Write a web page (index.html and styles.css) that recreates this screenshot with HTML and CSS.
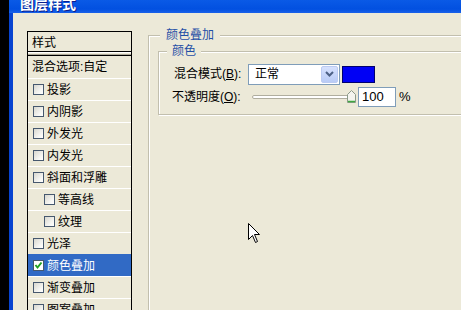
FILE: index.html
```html
<!DOCTYPE html>
<html lang="zh-CN">
<head>
    <meta charset="UTF-8">
    <title>图层样式</title>
    <link rel="stylesheet" href="styles.css">
</head>
<body>
    <div class="screen">
        <div class="edge"></div>
        <div class="win">
            <div class="titlebar"><span class="title">图层样式</span></div>
            <div class="client">
                <div class="styles-list">
                    <div class="list-head">样式</div>
                    <div class="list-sep"></div>
                    <div class="list-item blend">混合选项:自定</div>
                    <div class="list-item"><span class="chk"></span>投影</div>
                    <div class="list-item"><span class="chk"></span>内阴影</div>
                    <div class="list-item"><span class="chk"></span>外发光</div>
                    <div class="list-item"><span class="chk"></span>内发光</div>
                    <div class="list-item"><span class="chk"></span>斜面和浮雕</div>
                    <div class="list-item sub"><span class="chk"></span>等高线</div>
                    <div class="list-item sub"><span class="chk"></span>纹理</div>
                    <div class="list-item"><span class="chk"></span>光泽</div>
                    <div class="list-item selected">
                        <span class="chk">
                            <svg viewBox="0 0 11 11" width="11" height="11"><path d="M2.5 5 L4.5 7.5 L8.5 2.5" fill="none" stroke="#21a121" stroke-width="2"/></svg>
                        </span>颜色叠加
                    </div>
                    <div class="list-item"><span class="chk"></span>渐变叠加</div>
                    <div class="list-item"><span class="chk"></span>图案叠加</div>
                </div>

                <div class="panel">
                    <fieldset class="group outer">
                        <legend>颜色叠加</legend>
                        <fieldset class="group inner">
                            <legend>颜色</legend>
                            <div class="form">
                                <label class="lbl">混合模式(<u>B</u>):</label>
                                <div class="ctrl">
                                    <div class="combo">
                                        <span class="combo-text">正常</span>
                                        <span class="combo-btn">
                                            <svg viewBox="0 0 9 6" width="9" height="6"><path d="M1 1 L4.5 4.5 L8 1" fill="none" stroke="#4d6185" stroke-width="2"/></svg>
                                        </span>
                                    </div>
                                    <div class="swatch"></div>
                                </div>

                                <label class="lbl opacity">不透明度(<u>O</u>):</label>
                                <div class="ctrl">
                                    <div class="slider">
                                        <div class="track"></div>
                                        <svg class="thumb" viewBox="0 0 9 13" width="9" height="13">
                                            <path d="M4.5 0.5 L8.5 4.5 L8.5 12.5 L0.5 12.5 L0.5 4.5 Z" fill="#f4f4ee" stroke="#8c9a8a"/>
                                            <path d="M1 11.5 L8 11.5" stroke="#3fa83f" stroke-width="1.5"/>
                                        </svg>
                                    </div>
                                    <div class="num">100</div>
                                    <span class="pct">%</span>
                                </div>
                            </div>
                        </fieldset>
                    </fieldset>
                </div>
            </div>
        </div>

        <svg class="cursor" viewBox="0 0 13 22" width="13" height="22">
            <path d="M0.5 0.5 L0.5 16.5 L4.5 12.5 L7.5 19.5 L9.5 18.5 L6.5 11.5 L11.5 11.5 Z" fill="#fff" stroke="#000"/>
        </svg>
    </div>
</body>
</html>
```

FILE: styles.css
```css
* {
    box-sizing: border-box;
}
body {
    margin: 0;
    background: #000;
    font-family: 'Liberation Sans', 'Noto Sans CJK SC', sans-serif;
    font-size: 12px;
    color: #000;
}
.screen {
    position: relative;
    width: 461px;
    height: 310px;
    display: flex;
    overflow: hidden;
    background: #000;
}
.edge {
    width: 9px;
    flex-shrink: 0;
    background: #000;
}
.win {
    flex: 1;
    display: flex;
    flex-direction: column;
    min-width: 0;
    min-height: 0;
}
.titlebar {
    height: 13px;
    flex-shrink: 0;
    overflow: hidden;
    padding-left: 11px;
    background: linear-gradient(#0a5ae6, #0250e0 70%, #1a62ea);
}
.title {
    display: block;
    margin-top: -3px;
    line-height: 15px;
    font-size: 14px;
    font-weight: bold;
    color: #fff;
    text-shadow: 1px 1px 0 #0a1e8c;
}
.client {
    flex: 1;
    min-height: 0;
    overflow: hidden;
    display: flex;
    align-items: flex-start;
    padding: 18px 0 0 14px;
    background: #ece9d8;
    border-left: 4px solid #0844d0;
}

/* left style list */
.styles-list {
    width: 105px;
    flex-shrink: 0;
    border: 1px solid #000;
    border-bottom: none;
}
.list-head {
    height: 20px;
    padding-left: 4px;
    display: flex;
    align-items: center;
    border-bottom: 1px solid #000;
}
.list-sep {
    height: 4px;
    border-bottom: 1px solid #000;
    background: linear-gradient(#fff 0 1px, #ece9d8 1px 2px, #aca899 2px 3px);
}
.list-item {
    height: 22px;
    padding-left: 5px;
    display: flex;
    align-items: center;
    border-top: 1px solid #fff;
    line-height: 14px;
    white-space: nowrap;
}
.list-item.blend {
    height: 22px;
    padding-left: 4px;
    border-top: none;
}
.list-item.sub {
    padding-left: 16px;
}
.list-item.selected {
    background: #316ac5;
    border-top-color: #316ac5;
    color: #fff;
}
.chk {
    width: 11px;
    height: 11px;
    margin-right: 3px;
    flex-shrink: 0;
    border: 1px solid #46586e;
    background: linear-gradient(135deg, #d8d7cf, #f7f7f4 70%, #fff);
    display: flex;
}
.chk svg {
    margin: -1px;
}
.selected .chk {
    background: #fff;
}

/* right panel */
.panel {
    flex: 1;
    margin: -3px -30px 0 16px;
}
.group {
    margin: 0;
    border: 1px solid #c2bfae;
    box-shadow: inset 1px 1px 0 #fff, 1px 1px 0 #fff;
}
.group legend {
    padding: 0 6px;
    line-height: 14px;
    color: #1f4fa6;
    background: #ece9d8;
}
.outer {
    height: 320px;
    padding: 2px 0 0 9px;
}
.outer > legend {
    margin-left: 2px;
}
.inner {
    padding: 5px 0 6px 7px;
}
.inner legend {
    padding: 0 5px;
    margin-left: 1px;
}
.form {
    display: grid;
    grid-template-columns: 74px auto;
    grid-template-rows: 22px 23px;
    align-items: center;
    padding-left: 8px;
}
.lbl {
    white-space: nowrap;
    line-height: 14px;
}
.lbl.opacity {
    margin-left: -2px;
}
.ctrl {
    display: flex;
    align-items: center;
}
.combo {
    width: 92px;
    height: 21px;
    display: flex;
    align-items: center;
    justify-content: space-between;
    border: 1px solid #7f9db9;
    background: #fff;
    padding: 1px;
}
.combo-text {
    padding-left: 5px;
    line-height: 14px;
}
.combo-btn {
    width: 17px;
    height: 17px;
    display: flex;
    align-items: center;
    justify-content: center;
    border: 1px solid #bccbf2;
    border-radius: 2px;
    background: linear-gradient(#d6e1fd, #b9cbf6);
}
.swatch {
    width: 33px;
    height: 17px;
    margin-left: 2px;
    border: 1px solid #00006e;
    background: #0000f5;
}
.slider {
    position: relative;
    width: 110px;
    height: 13px;
    display: flex;
    align-items: center;
    padding-left: 4px;
}
.track {
    width: 99px;
    height: 4px;
    border: 1px solid #b0ae9f;
    border-radius: 2px;
    background: #fff;
}
.thumb {
    position: absolute;
    right: 2px;
    top: 0;
}
.num {
    width: 38px;
    height: 20px;
    padding-left: 3px;
    border: 1px solid #7f9db9;
    background: #fff;
    font-size: 13px;
    line-height: 18px;
}
.pct {
    margin-left: 3px;
    font-size: 13px;
}
.cursor {
    position: absolute;
    left: 248px;
    top: 223px;
}
```
